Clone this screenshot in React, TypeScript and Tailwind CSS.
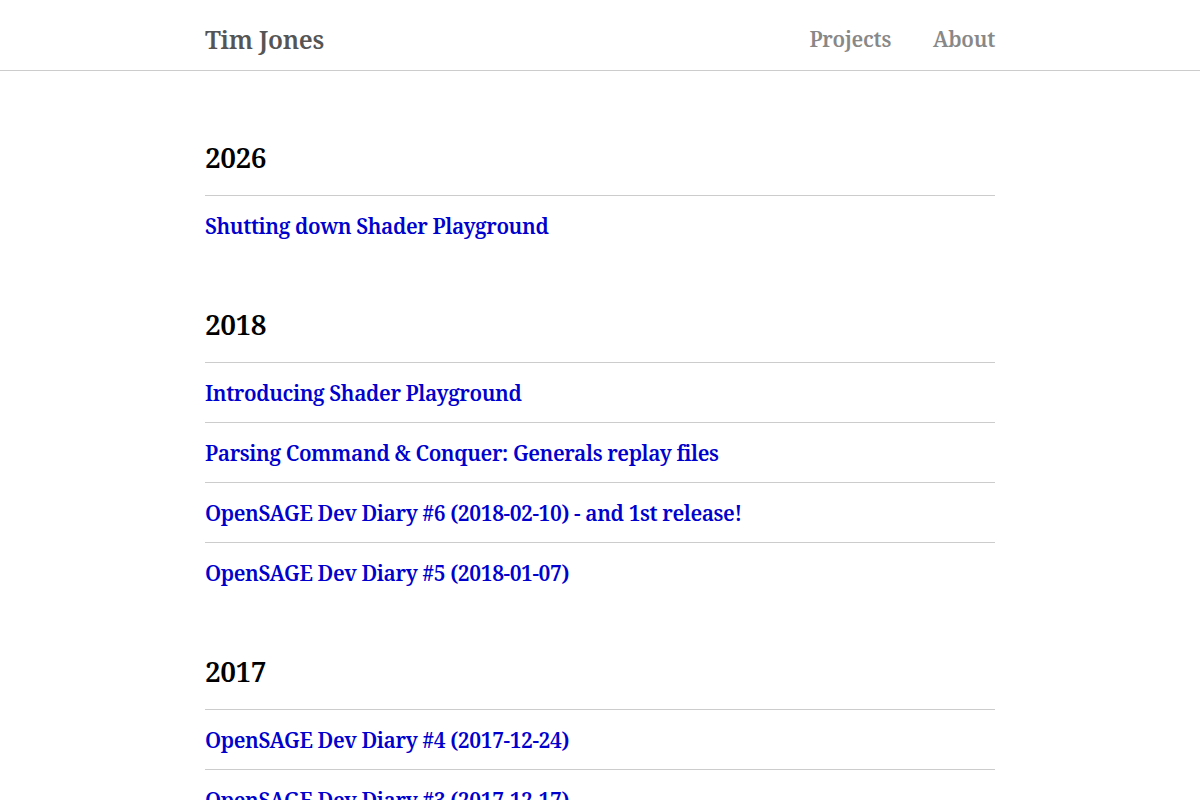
const sections = [
  { year: "2026", posts: ["Shutting down Shader Playground"] },
  {
    year: "2018",
    posts: [
      "Introducing Shader Playground",
      "Parsing Command & Conquer: Generals replay files",
      "OpenSAGE Dev Diary #6 (2018-02-10) - and 1st release!",
      "OpenSAGE Dev Diary #5 (2018-01-07)",
    ],
  },
  {
    year: "2017",
    posts: [
      "OpenSAGE Dev Diary #4 (2017-12-24)",
      "OpenSAGE Dev Diary #3 (2017-12-17)",
      "OpenSAGE Dev Diary #2 (2017-12-10)",
    ],
  },
]

export default function App() {
  return (
    <div className="h-screen overflow-hidden bg-white font-['Noto_Serif','DejaVu_Serif',serif]">
      <header className="h-[71px] border-b border-[#cccccc]">
        <div className="w-[790px] mx-auto h-[70px] pt-[9px] flex items-center justify-between">
          <a href="#" className="text-[25px] tracking-[-0.35px] text-[#555555] font-semibold">
            Tim Jones
          </a>
          <nav className="flex gap-[42px] text-[21px] tracking-[-0.25px] text-[#888888] font-semibold">
            <a href="#">Projects</a>
            <a href="#">About</a>
          </nav>
        </div>
      </header>

      <main className="w-[790px] mx-auto pt-[66px]">
        {sections.map((s) => (
          <section key={s.year} className="mb-[49px]">
            <h2 className="text-[28px] leading-[40px] tracking-[-0.5px] text-black font-semibold mb-[18px]">
              {s.year}
            </h2>
            <ul>
              {s.posts.map((p) => (
                <li key={p} className="border-t border-[#cccccc] h-[60px] pt-[2px] flex items-center">
                  <a href="#" className="text-[21px] tracking-[-0.4px] text-[#0000cc] font-semibold">
                    {p}
                  </a>
                </li>
              ))}
            </ul>
          </section>
        ))}
      </main>
    </div>
  )
}
